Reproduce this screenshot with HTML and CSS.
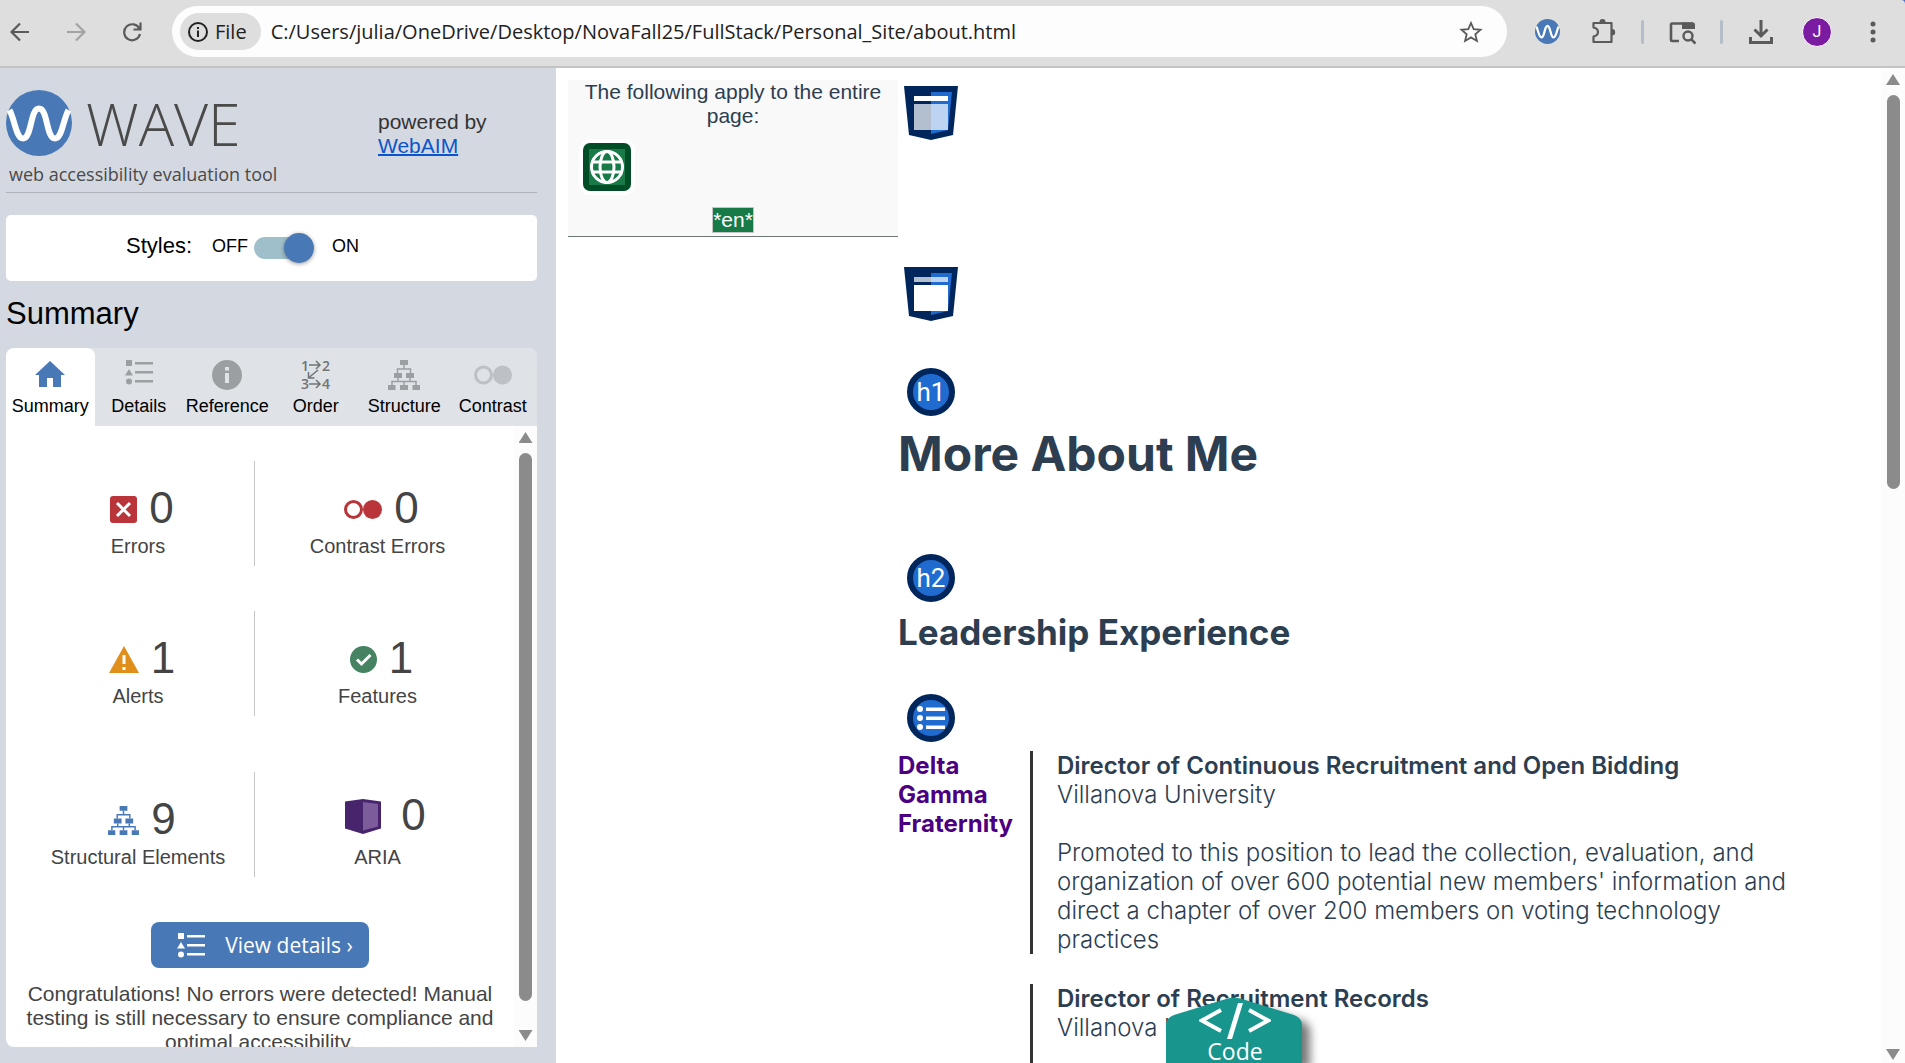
FILE: index.html
```
<!DOCTYPE html>
<html lang="en">
<head>
<meta charset="utf-8">
<meta name="viewport" content="width=device-width, initial-scale=1">
<title>About</title>
<link rel="stylesheet" href="styles.css">
</head>
<body>
<svg class="defs" aria-hidden="true">
  <symbol id="wave-logo" viewBox="0 0 66 66">
    <circle cx="33" cy="33" r="33" fill="#4878b6"/>
    <path d="M3.500 20C9 30 10 48.500 17 48.500C26 48.500 24 18.500 33 18.500S40 48.500 49 48.500C56 48.500 57 30 62.500 20" fill="none" stroke="#fff" stroke-width="6"/>
  </symbol>
  <symbol id="list" viewBox="0 0 28 25">
    <path d="M1 0h6v6H1zM4 9l4 6.500H0zM10 2h18v2.500H10zM10 11h18v2.500H10zM10 20h18v2.500H10z"/><circle cx="4" cy="21.500" r="3"/>
  </symbol>
  <symbol id="tree" viewBox="0 0 32 30">
    <path d="M12 0h8v5h-8zM6 13h8v5H6zM18 13h8v5h-8zM0 25h7.500v5H0zM12 25h8v5h-8zM24.500 25H32v5h-7.500z"/>
    <path d="M16 5v4M9.500 13V9h13v4M10 18v3.500M22 18v3.500M4 25v-3.500h24V25M16 21.500V25" fill="none" stroke="currentColor" stroke-width="1.500"/>
  </symbol>
  <symbol id="contrast" viewBox="0 0 38 20">
    <circle cx="9.500" cy="10" r="8" fill="none" stroke="currentColor" stroke-width="3"/><circle cx="28.500" cy="10" r="9.500"/>
  </symbol>
</svg>

<header class="toolbar">
  <button class="tool" aria-label="Back"><svg width="20" height="20" viewBox="0 0 20 20"><path d="M19 10H2M10 1.500L1.500 10l8.500 8.500" class="line"/></svg></button>
  <button class="tool tool-off" aria-label="Forward"><svg width="20" height="20" viewBox="0 0 20 20"><path d="M1 10h17M10 1.500l8.500 8.500L10 18.500" class="line"/></svg></button>
  <button class="tool" aria-label="Reload"><svg width="20" height="20" viewBox="0 0 20 20"><path d="M17.500 7A8 8 0 1 0 18 12M18.500 .500V7.500H11.500" class="line"/></svg></button>
  <div class="address">
    <button class="chip"><svg width="22" height="22" viewBox="0 0 22 22"><circle cx="11" cy="11" r="9" fill="none" stroke="#222" stroke-width="2"/><path d="M10 9.500h2V16h-2zM10 6h2v2h-2z" fill="#222"/></svg>File</button>
    <input class="url" aria-label="Address" value="C:/Users/julia/OneDrive/Desktop/NovaFall25/FullStack/Personal_Site/about.html">
    <button class="tool" aria-label="Bookmark"><svg width="24" height="24" viewBox="0 0 24 24"><path d="M12 3l2.700 6.200 6.800.600-5.200 4.500 1.600 6.600L12 17.400l-5.900 3.500 1.600-6.600-5.200-4.500 6.800-.600z" fill="none" stroke="#5a5a5a" stroke-width="1.800"/></svg></button>
  </div>
  <button class="tool" aria-label="WAVE"><svg width="25" height="25"><use href="#wave-logo"/></svg></button>
  <button class="tool" aria-label="Extensions"><svg width="26" height="26" viewBox="0 0 26 26"><path d="M3.500 4h18v19h-18v-5.500q4.500-1 4.500-4.500t-4.500-4.500z" fill="none" stroke="#5a5a5a" stroke-width="2.200" stroke-linejoin="round"/><path d="M9.500 3a3 3 0 0 1 6 0zM22 10a3.200 3.200 0 0 1 0 6.400z" fill="#5a5a5a"/></svg></button>
  <span class="rule"></span>
  <button class="tool" aria-label="Search tabs"><svg width="28" height="26" viewBox="0 0 28 26"><path d="M11 22H4Q3 22 3 21V6Q3 4.500 4 4.500H25" fill="none" stroke="#5a5a5a" stroke-width="2.600"/><path d="M14 3.500h11q2 0 2 2V10H14z" fill="#5a5a5a"/><circle cx="20" cy="17" r="4.500" fill="none" stroke="#5a5a5a" stroke-width="2.400"/><path d="M23 20l4.500 4.500" stroke="#5a5a5a" stroke-width="2.600"/></svg></button>
  <span class="rule"></span>
  <button class="tool" aria-label="Downloads"><svg width="26" height="26" viewBox="0 0 26 26"><path d="M13 1v15M6.500 10.500l6.500 6.500 6.500-6.500M2.500 18v5.500h21V18" fill="none" stroke="#5a5a5a" stroke-width="3"/></svg></button>
  <button class="tool" aria-label="Profile"><span class="avatar">J</span></button>
  <button class="tool" aria-label="Menu"><svg width="6" height="22" viewBox="0 0 6 22" fill="#5a5a5a"><circle cx="3" cy="3" r="2.500"/><circle cx="3" cy="11" r="2.500"/><circle cx="3" cy="19" r="2.500"/></svg></button>
</header>

<div class="window">
  <aside class="sidebar">
    <div class="brand">
      <div class="brand-main">
        <div class="brand-name"><svg width="66" height="66"><use href="#wave-logo"/></svg><span>WAVE</span></div>
        <p class="tagline">web accessibility evaluation tool</p>
      </div>
      <p class="powered">powered by<br><a href="#webaim">WebAIM</a></p>
    </div>

    <div class="styles-box">
      <span class="styles-label">Styles:</span>
      <label class="switch"><span>OFF</span><input type="checkbox" role="switch" checked><span>ON</span></label>
    </div>

    <h2 class="side-title">Summary</h2>

    <nav class="tabs">
      <button class="tab tab-active"><svg width="30" height="30" viewBox="0 0 30 30"><path d="M15 1L0 15h4v12h8v-9h6v9h8V15h4z"/></svg>Summary</button>
      <button class="tab"><svg width="28" height="25" class="raise"><use href="#list"/></svg>Details</button>
      <button class="tab"><svg width="30" height="30" viewBox="0 0 30 30"><circle cx="15" cy="15" r="15"/><path d="M13 7h4v3.500h-4zM13 13h4v10h-4z" fill="#dfe2e7"/></svg>Reference</button>
      <button class="tab"><svg width="30" height="30" viewBox="0 0 30 30" class="order"><text x="0" y="11">1</text><text x="21" y="11">2</text><text x="0" y="29">3</text><text x="21" y="29">4</text><path d="M8 5h11M15 1l4 4-4 4M8 24h11M15 20l4 4-4 4M17 10L8 17.500M7.500 12v6h6" fill="none" stroke="#707476" stroke-width="1.500"/></svg>Order</button>
      <button class="tab"><svg width="32" height="30"><use href="#tree"/></svg>Structure</button>
      <button class="tab tab-pale"><svg width="38" height="30"><use href="#contrast"/></svg>Contrast</button>
    </nav>

    <div class="panel">
      <div class="panel-body">
        <dl class="counts">
          <div class="count"><dd><svg width="27" height="27" viewBox="0 0 27 27"><rect width="27" height="27" rx="3" fill="#b93539"/><path d="M7 7l13 13M20 7L7 20" stroke="#fff" stroke-width="3"/></svg>0</dd><dt>Errors</dt></div>
          <div class="count"><dd><svg width="38" height="27" color="#b93539" fill="#b93539"><use href="#contrast"/></svg>0</dd><dt>Contrast Errors</dt></div>
          <div class="count"><dd><svg width="30" height="27" viewBox="0 0 30 27"><path d="M15 0l15 27H0z" fill="#e08f1b"/><path d="M13.500 9h3v9h-3zM13.500 21h3v3h-3z" fill="#fff"/></svg>1</dd><dt>Alerts</dt></div>
          <div class="count"><dd><svg width="27" height="27" viewBox="0 0 27 27"><circle cx="13.500" cy="13.500" r="13.500" fill="#468362"/><path d="M7 13.500l4.500 4.500 9-9" fill="none" stroke="#fff" stroke-width="3"/></svg>1</dd><dt>Features</dt></div>
          <div class="count"><dd><svg width="31" height="29" color="#4878b6" fill="#4878b6"><use href="#tree"/></svg>9</dd><dt>Structural Elements</dt></div>
          <div class="count count-tall"><dd><svg width="36" height="35" viewBox="0 0 36 35"><path d="M0 2.500L18 0l18 2.500v27L18 35 0 29.500z" fill="#47246b"/><path d="M18 3l15 2v22.500L18 31.500z" fill="#7c5c9b"/></svg>0</dd><dt>ARIA</dt></div>
        </dl>
        <button class="view"><svg width="28" height="25" fill="#fff"><use href="#list"/></svg>View details ›</button>
        <p class="congrats">Congratulations! No errors were detected! Manual testing is still necessary to ensure compliance and optimal accessibility.</p>
      </div>
      <div class="scroll" aria-hidden="true"><i class="up"></i><i class="thumb"></i><i class="down"></i></div>
    </div>
  </aside>

  <main class="page">
    <section class="note">
      <p>The following apply to the entire page:</p>
      <svg width="56" height="56" viewBox="0 0 56 56"><rect width="56" height="56" rx="10" fill="#fff"/><rect x="4" y="4" width="48" height="48" rx="7" fill="#004d26"/><path d="M10 10h36v36H10z" fill="#177a47"/><g fill="none" stroke="#fff" stroke-width="3"><circle cx="28" cy="28" r="15.500"/><ellipse cx="28" cy="28" rx="7" ry="15.500"/><path d="M14 23h28M14 33h28"/></g></svg>
      <p><span class="lang">*en*</span></p>
    </section>

    <div class="content">
      <svg class="shield" width="54" height="54" viewBox="0 0 54 54"><path d="M0 0h54l-5 49-22 5-22-5z" fill="#00265c"/><path d="M27 6h21l-4 38-17 4z" fill="#1f6bd0"/><path d="M10 10h34v5H10z" fill="#fff"/><path d="M10 18h34v26H10z" fill="#fff" fill-opacity=".7"/></svg>
      <svg class="shield shield-main" width="54" height="54" viewBox="0 0 54 54"><path d="M0 0h54l-5 49-22 5-22-5z" fill="#00265c"/><path d="M27 6h21l-4 38-17 4z" fill="#1f6bd0"/><path d="M10 10h34v5H10z" fill="#fff" fill-opacity=".7"/><path d="M10 18h34v26H10z" fill="#fff"/></svg>
      <span class="mark mark-h1">h1</span>
      <h1>More About Me</h1>
      <span class="mark mark-h2">h2</span>
      <h2>Leadership Experience</h2>
      <span class="mark mark-list"><svg width="28" height="24" viewBox="0 0 28 24" fill="#fff"><circle cx="3" cy="3" r="3"/><circle cx="3" cy="12" r="3"/><circle cx="3" cy="21" r="3"/><path d="M9 1.500h19v3.500H9zM9 10.500h19V14H9zM9 19.500h19V23H9z"/></svg></span>
      <ul class="roles">
        <li class="role">
          <strong class="group">Delta Gamma Fraternity</strong>
          <div class="role-text">
            <h3>Director of Continuous Recruitment and Open Bidding</h3>
            <p>Villanova University</p>
            <p class="detail">Promoted to this position to lead the collection, evaluation, and organization of over 600 potential new members' information and direct a chapter of over 200 members on voting technology practices</p>
          </div>
        </li>
        <li class="role">
          <span></span>
          <div class="role-text">
            <h3>Director of Recruitment Records</h3>
            <p>Villanova University</p>
            <p class="detail"></p>
          </div>
        </li>
      </ul>
    </div>

    <div class="scroll scroll-page" aria-hidden="true"><i class="up"></i><i class="thumb"></i><i class="down"></i></div>

    <button class="code">
      <svg class="code-shape" width="148" height="66" viewBox="0 0 148 66"><path d="M0 66V28Q0 21 8 18L60 2Q68-1 76 2l52 16q8 3 8 10v38z" fill="#18968e"/></svg>
      <svg width="72" height="36" viewBox="0 0 72 36"><path d="M22 7L3 17.500 22 28M50 7l19 10.500L50 28" fill="none" stroke="#fff" stroke-width="4"/><path d="M39 0h5L33 36h-5z" fill="#fff"/></svg>
      <span>Code</span>
    </button>
  </main>
</div>
</body>
</html>
```
FILE: styles.css
```
* { box-sizing: border-box; }
body {
  margin: 0;
  height: 100vh;
  display: flex;
  flex-direction: column;
  overflow: hidden;
  background: #3f6fc8;
  font-family: "Liberation Sans", Arial, sans-serif;
}
h1, h2, h3, p, dl, dd, ul { margin: 0; padding: 0; }
button { border: 0; background: none; padding: 0; font: inherit; color: inherit; }
svg { display: block; flex: none; }
.defs { position: absolute; width: 0; height: 0; }

/* Browser toolbar */
.toolbar {
  flex: none;
  display: flex;
  align-items: center;
  gap: 16px;
  padding: 6px 12px 9px 0;
  background: #dedede;
  border-bottom: 2px solid #c3c3c3;
  border-top-right-radius: 4px;
}
.tool {
  flex: none;
  width: 40px;
  height: 40px;
  display: flex;
  align-items: center;
  justify-content: center;
  color: #5a5a5a;
}
.tool-off { color: #a3a3a3; }
.line { fill: none; stroke: currentColor; stroke-width: 2.2; }
.address {
  flex: 1;
  min-width: 0;
  height: 51px;
  margin: 0 4px;
  padding: 0 16px 0 8px;
  display: flex;
  align-items: center;
  gap: 10px;
  border-radius: 26px;
  background: #fdfdfd;
  font-family: "Open Sans", sans-serif;
  font-size: 20px;
  color: #222;
}
.chip {
  flex: none;
  display: flex;
  align-items: center;
  gap: 6px;
  height: 37px;
  padding: 0 14px 0 7px;
  border-radius: 19px;
  background: #dedede;
}
.url {
  flex: 1;
  min-width: 0;
  padding: 0;
  border: 0;
  background: none;
  font: inherit;
  color: inherit;
}
.rule { width: 3px; height: 24px; margin: 0 2px; border-radius: 2px; background: #b3bec8; }
.avatar {
  width: 30px;
  height: 30px;
  border: 1px solid #fff;
  border-radius: 50%;
  background: #7a1ba1;
  color: #fff;
  font: 16px/28px Roboto, sans-serif;
  text-align: center;
}

/* Evaluation sidebar */
.window { flex: 1; min-height: 0; display: flex; }
.sidebar {
  flex: none;
  width: 556px;
  padding: 22px 19px 16px 6px;
  display: flex;
  flex-direction: column;
  background: #d4d8e0;
}
.brand {
  display: flex;
  height: 103px;
  border-bottom: 1px solid #b0b4b8;
}
.brand-main { width: 372px; color: #4a4a4a; font-family: "Open Sans", sans-serif; }
.brand-name { display: flex; align-items: center; gap: 14px; height: 66px; font-size: 59px; font-weight: 300; }
.tagline { padding: 6px 0 0 3px; font-size: 18px; line-height: 25px; }
.powered { padding-top: 20px; font-size: 21px; line-height: 24px; color: #333; }
.powered a { color: #0b55cc; text-decoration-thickness: 2px; }
.styles-box {
  display: flex;
  align-items: center;
  gap: 20px;
  height: 66px;
  margin-top: 22px;
  padding: 0 0 4px 120px;
  border-radius: 5px;
  background: #fff;
}
.styles-label { font-size: 22px; }
.switch { display: flex; align-items: center; font-size: 18px; }
.switch input {
  appearance: none;
  display: flex;
  justify-content: flex-end;
  align-items: center;
  width: 60px;
  height: 22px;
  margin: 4px 18px 0 6px;
  border-radius: 11px;
  background: linear-gradient(90deg, #9fc0ca 50px, transparent 50px);
}
.switch input::before {
  content: "";
  width: 30px;
  height: 30px;
  border-radius: 50%;
  background: #4878b6;
  box-shadow: 0 1px 4px #0006;
}
.side-title { margin-top: 15px; font-size: 31px; line-height: 36px; font-weight: 400; }
.tabs {
  flex: none;
  display: grid;
  grid-template-columns: repeat(6, 1fr);
  height: 78px;
  margin-top: 16px;
  border-radius: 8px 8px 0 0;
  background: #dfe2e7;
}
.tab {
  display: flex;
  flex-direction: column;
  align-items: center;
  gap: 6px;
  min-width: 0;
  padding-top: 12px;
  font-size: 18px;
  line-height: 20px;
  color: #000;
}
.tab svg { height: 30px; color: #9c9fa2; fill: #9c9fa2; }
.tab .raise { height: 25px; margin-bottom: 5px; }
.tab-active { border-radius: 8px 8px 0 0; background: #fff; }
.tab-active svg { fill: #4878b6; }
.tab-pale svg { color: #bdc1c5; fill: #bdc1c5; }
.tab .order { overflow: visible; font: 600 14px "Open Sans", sans-serif; fill: #707476; }
.panel {
  flex: 1;
  min-height: 0;
  display: flex;
  overflow: hidden;
  border-radius: 0 0 0 8px;
  background: #fff;
}
.panel-body { flex: 1; padding: 35px 0 0; color: #444; text-align: center; }
.counts { display: grid; grid-template-columns: 233fr 245fr; row-gap: 45px; padding: 0 14px 0 16px; }
.count { display: flex; flex-direction: column; height: 105px; padding-top: 21px; }
.count:nth-child(odd) { border-right: 1px solid #c4c6c9; }
.count:nth-child(n+5) { margin-top: 11px; }
.count dd {
  display: flex;
  justify-content: center;
  align-items: center;
  gap: 12px;
  height: 51px;
  padding-left: 8px;
  font-size: 44px;
}
.count dt { font-size: 20px; line-height: 24px; padding-top: 1px; }
.count dd svg { margin-top: 4px; }
.count-tall dd { gap: 20px; padding: 0 0 8px 16px; }
.view {
  display: flex;
  align-items: center;
  gap: 20px;
  height: 46px;
  margin: 45px auto 14px;
  padding: 0 16px 0 26px;
  border-radius: 8px;
  background: #4878b6;
  color: #fff;
  font: 21px/44px "Open Sans", sans-serif;
}
.congrats { font-size: 21px; line-height: 24px; padding: 0 16px; }

/* Scroll bars */
.scroll {
  flex: none;
  width: 23px;
  padding: 6px 0;
  display: flex;
  flex-direction: column;
  align-items: center;
  background: #fcfcfc;
}
.up, .down { width: 14px; height: 11px; background: #8b8b8b; clip-path: polygon(50% 0, 100% 100%, 0 100%); }
.down { clip-path: polygon(0 0, 100% 0, 50% 100%); margin-top: auto; }
.thumb { width: 13px; height: 90%; margin-top: 10px; border-radius: 7px; background: #8b8b8b; }
.scroll-page { align-self: stretch; width: 24px; padding-bottom: 3px; }
.scroll-page .thumb { height: 40%; }

/* Evaluated page */
.page {
  flex: 1;
  min-width: 0;
  position: relative;
  display: flex;
  align-items: flex-start;
  overflow: hidden;
  padding-left: 12px;
  background: #fff;
  color: #2c3e50;
}
.note {
  flex: none;
  width: 330px;
  margin-top: 12px;
  padding-bottom: 4px;
  border-bottom: 1px solid #6f7775;
  background: #f9f9f9;
  font-size: 21px;
  line-height: 24px;
  text-align: center;
}
.note svg { margin: 11px 0 13px 11px; }
.lang { display: inline-block; outline: 1px solid #c5c5c5; background: #177a47; color: #fff; }
.content {
  flex: 1;
  min-width: 0;
  padding: 18px 84px 0 0;
  font-family: Inter, "Open Sans", sans-serif;
}
.shield { margin-left: 6px; }
.shield-main { margin-top: 127px; }
.mark {
  display: flex;
  align-items: center;
  justify-content: center;
  width: 48px;
  height: 48px;
  margin-left: 9px;
  border: 6px solid #00265c;
  border-radius: 50%;
  background: #1f6bd0;
  color: #fff;
  font: 26px/1 Roboto, sans-serif;
}
.mark-h1 { margin-top: 47px; }
.mark-h2 { margin-top: 72px; }
.mark-list { margin-top: 38px; }
h1 { margin-top: 10px; font-size: 48px; line-height: 56px; }
.content h2 { margin-top: 8px; padding-bottom: 2px; font-size: 35px; line-height: 44px; }
.roles {
  display: grid;
  row-gap: 30px;
  margin-top: 9px;
  list-style: none;
  font-size: 24px;
  line-height: 29px;
  font-weight: 300;
}
.role { display: grid; grid-template-columns: 132px 1fr; }
.group { font-weight: 700; color: #4b0082; }
.role-text { padding-left: 24px; border-left: 3px solid #333; }
.role h3 { font-size: 24px; font-weight: 600; }
.detail { margin-top: 29px; min-height: 29px; }

/* Code drawer handle */
.code {
  position: absolute;
  z-index: 1;
  left: 610px;
  bottom: 0;
  width: 138px;
  height: 66px;
  display: flex;
  flex-direction: column;
  align-items: center;
  padding-top: 6px;
  color: #fff;
  font: 23px/24px "Open Sans", sans-serif;
}
.code-shape { position: absolute; left: 0; top: 0; z-index: -1; filter: drop-shadow(8px 6px 5px #0008); }
```
